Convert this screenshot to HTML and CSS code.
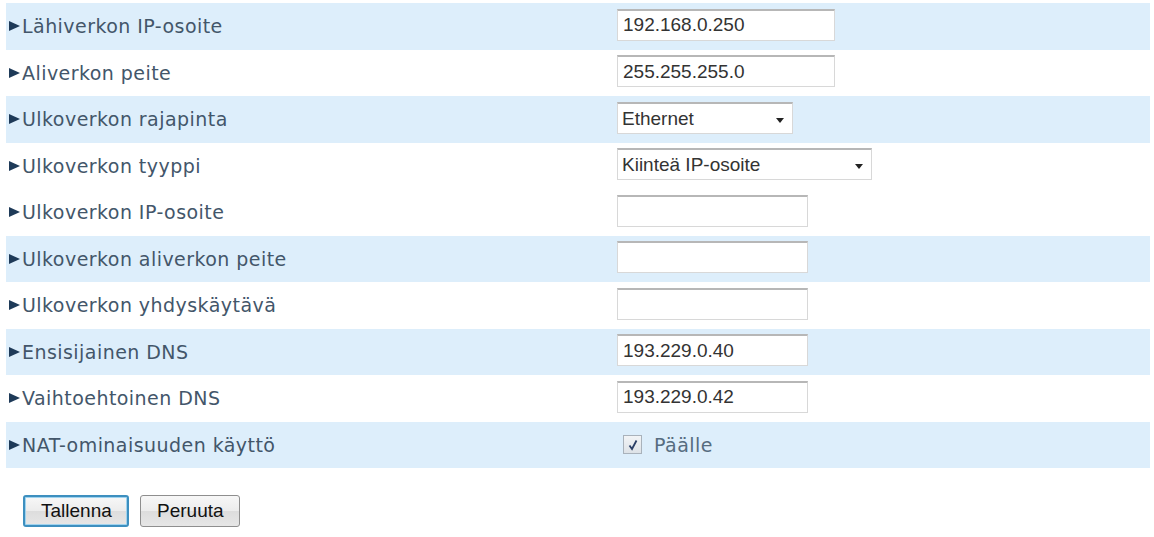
FILE: index.html
```html
<!DOCTYPE html>
<html lang="fi">
<head>
<meta charset="utf-8">
<title>Asetukset</title>
<link rel="stylesheet" href="styles.css">
</head>
<body>
<form class="form">
  <div class="row alt">
    <div class="label"><span class="arrow"></span>Lähiverkon IP-osoite</div>
    <div class="value"><input class="field wide" type="text" value="192.168.0.250"></div>
  </div>
  <div class="row">
    <div class="label"><span class="arrow"></span>Aliverkon peite</div>
    <div class="value"><input class="field wide" type="text" value="255.255.255.0"></div>
  </div>
  <div class="row alt">
    <div class="label"><span class="arrow"></span>Ulkoverkon rajapinta</div>
    <div class="value"><span class="selwrap"><select class="sel sel-a"><option>Ethernet</option></select></span></div>
  </div>
  <div class="row">
    <div class="label"><span class="arrow"></span>Ulkoverkon tyyppi</div>
    <div class="value"><span class="selwrap"><select class="sel sel-b"><option>Kiinteä IP-osoite</option></select></span></div>
  </div>
  <div class="row">
    <div class="label"><span class="arrow"></span>Ulkoverkon IP-osoite</div>
    <div class="value"><input class="field" type="text" value=""></div>
  </div>
  <div class="row alt">
    <div class="label"><span class="arrow"></span>Ulkoverkon aliverkon peite</div>
    <div class="value"><input class="field" type="text" value=""></div>
  </div>
  <div class="row">
    <div class="label"><span class="arrow"></span>Ulkoverkon yhdyskäytävä</div>
    <div class="value"><input class="field" type="text" value=""></div>
  </div>
  <div class="row alt">
    <div class="label"><span class="arrow"></span>Ensisijainen DNS</div>
    <div class="value"><input class="field" type="text" value="193.229.0.40"></div>
  </div>
  <div class="row">
    <div class="label"><span class="arrow"></span>Vaihtoehtoinen DNS</div>
    <div class="value"><input class="field" type="text" value="193.229.0.42"></div>
  </div>
  <div class="row alt">
    <div class="label"><span class="arrow"></span>NAT-ominaisuuden käyttö</div>
    <div class="value"><label class="check"><span class="box"><svg width="14" height="14" viewBox="0 0 14 14"><path d="M3.5 7.5 L6 11 L10.5 2.5" fill="none" stroke="#2b3f66" stroke-width="1.8"/></svg></span>Päälle</label></div>
  </div>
  <div class="buttons">
    <button type="button" class="btn primary">Tallenna</button>
    <button type="button" class="btn">Peruuta</button>
  </div>
</form>
</body>
</html>
```
FILE: styles.css
```css
html, body {
  margin: 0;
  padding: 0;
  background: #ffffff;
}
.form {
  padding: 3px 4px 0 6px;
}
.row {
  display: flex;
  align-items: center;
  height: 46.5px;
}
.row.alt {
  background: #ddeefb;
}
.label {
  width: 611px;
  padding-left: 3px;
  box-sizing: border-box;
  font-family: "DejaVu Sans", Verdana, sans-serif;
  font-size: 19px;
  letter-spacing: 0.45px;
  color: #43566a;
  display: flex;
  align-items: center;
}
.arrow {
  width: 0;
  height: 0;
  border-top: 5px solid transparent;
  border-bottom: 5px solid transparent;
  border-left: 11px solid #1e3a58;
  margin-right: 2px;
  position: relative;
  top: 0;
}
.value {
  display: flex;
  align-items: center;
}
.field {
  width: 191px;
  height: 32px;
  box-sizing: border-box;
  border: 1px solid #d8d8d8;
  border-top: 2px solid #b7b7b7;
  background: #fff;
  font-family: "Liberation Sans", Arial, sans-serif;
  font-size: 19px;
  color: #333;
  padding: 0 5px;
  margin: -3px 0 0 0;
  outline: none;
}
.field.wide {
  width: 218px;
}
.selwrap {
  position: relative;
  display: inline-block;
}
.selwrap::after {
  content: "";
  position: absolute;
  right: 9px;
  top: 13px;
  border-left: 4px solid transparent;
  border-right: 4px solid transparent;
  border-top: 5px solid #222;
  pointer-events: none;
}
.sel {
  appearance: none;
  -webkit-appearance: none;
  height: 32px;
  box-sizing: border-box;
  border: 1px solid #d8d8d8;
  border-top: 2px solid #b7b7b7;
  background: #fff;
  font-family: "Liberation Sans", Arial, sans-serif;
  font-size: 19px;
  color: #333;
  padding: 0 4px;
  border-radius: 0;
  outline: none;
  margin-top: -3px;
}
.sel-a {
  width: 176px;
}
.sel-b {
  width: 255px;
}
.check {
  display: flex;
  align-items: center;
  font-family: "DejaVu Sans", Verdana, sans-serif;
  font-size: 19px;
  letter-spacing: 0.45px;
  color: #566c80;
  margin-left: 6px;
}
.box {
  width: 19px;
  height: 19px;
  box-sizing: border-box;
  border: 1px solid #a9b2bb;
  background: linear-gradient(#f2f4f6, #dde2e7);
  display: flex;
  align-items: center;
  justify-content: center;
  margin-right: 12px;
}
.box svg {
  display: block;
}
.buttons {
  display: flex;
  gap: 11px;
  padding: 27px 0 0 17px;
}
.btn {
  height: 32px;
  box-sizing: border-box;
  border: 1px solid #8e8e8e;
  border-radius: 3px;
  background: linear-gradient(#f7f7f7 0%, #ececec 50%, #dddddd 51%, #e6e6e6 100%);
  font-family: "Liberation Sans", Arial, sans-serif;
  font-size: 19px;
  color: #111;
  padding: 0 16px;
}
.btn.primary {
  width: 106px;
  border: 2px solid #3d8fbf;
  box-shadow: inset 0 0 0 1px #9fd3ef;
}
.btn:not(.primary) {
  width: 100px;
}
```
